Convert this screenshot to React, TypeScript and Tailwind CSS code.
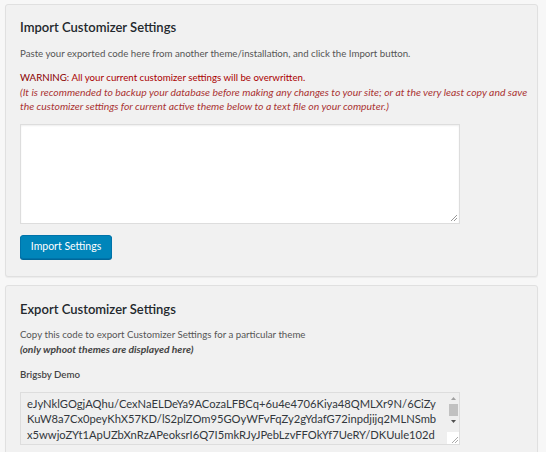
import React from "react";

const exportLines = [
  "eJyNklGOgjAQhu/CexNaELDeYa9ACozaLFBCq+6u4e4706Kiya48QMLXr9N/6CiZy",
  "KuW8a7Cx0peyKhX57KD/lS2plZOm95GOyWFvFqZy2gYdafG72inpdjijq2MLNSmb",
  "x5wwjoZYt1ApUZbXnRzAPeoksrI6Q7I5mkRJyJPebLzvFFOkYf7UeRY/DKUule102d",
];

const Card = ({ children, top }: { children: React.ReactNode; top: string }) => (
  <section
    className={`rounded-[3px] border border-[#e0e0e0] bg-[#f1f1f1] px-[14px] pb-[17px] shadow-[0_1px_1px_rgba(0,0,0,0.05)] ${top}`}
  >
    {children}
  </section>
);

const App = () => {
  return (
    <div className="min-h-screen bg-[#f7f7f7] pl-[5px] pr-[8px] pt-[4px] font-['Lato',sans-serif] text-[#555]">
      <Card top="pt-[12px]">
        <h2 className="text-[13px] font-semibold leading-[20px] text-[#23282d]">
          Import Customizer Settings
        </h2>
        <p className="mt-[9px] text-[9.7px] leading-[14px]">
          Paste your exported code here from another theme/installation, and click the Import button.
        </p>
        <div className="mt-[10px] w-[512px] text-[9.7px] leading-[14.5px] text-[#a00]">
          <p>
            <span className="text-[#8b0000]">WARNING</span>: All your current customizer settings will be overwritten.
          </p>
          <p className="text-[10.4px] italic text-[#a33]">
            (It is recommended to backup your database before making any changes to your site; or at the very least copy and save the customizer settings for current active theme below to a text file on your computer.)
          </p>
        </div>
        <div className="relative mt-[10px] h-[100px] w-[440px] border border-[#ddd] bg-white shadow-[inset_0_1px_2px_rgba(0,0,0,0.07)]">
          <svg className="absolute right-[1px] bottom-[1px]" width="9" height="9" viewBox="0 0 9 9">
            <path d="M8 2 L2 8 M8 5 L5 8" stroke="#999" strokeWidth="1" />
          </svg>
        </div>
        <button className="mt-[11px] h-[24px] w-[92px] rounded-[3px] border border-[#0073aa] bg-[#0085ba] text-[10.5px] text-white shadow-[0_1px_0_#006799]">
          Import Settings
        </button>
      </Card>

      <div className="mt-[8px]">
        <Card top="pt-[13px]">
          <h2 className="text-[13px] font-semibold leading-[20px] text-[#23282d]">
            Export Customizer Settings
          </h2>
          <p className="mt-[8px] text-[9.7px] leading-[15px]">
            Copy this code to export Customizer Settings for a particular theme
          </p>
          <p className="text-[10.3px] font-bold italic leading-[15px] text-[#444]">
            (only wphoot themes are displayed here)
          </p>
          <p className="mt-[10px] text-[9.7px] font-semibold leading-[15px] text-[#444]">
            Brigsby Demo
          </p>
          <div className="relative mt-[10px] flex h-[53px] w-[440px] border border-[#ddd] bg-[#efefef]">
            <div className="flex-1 overflow-hidden pl-[6px] pt-[3px] text-[11.2px] leading-[15.5px] text-[#32373c]">
              {exportLines.map((line) => (
                <div key={line} className="whitespace-pre">
                  {line}
                </div>
              ))}
            </div>
            <div className="flex w-[12px] flex-col items-center pt-[3px]">
              <svg width="7" height="5" viewBox="0 0 7 5">
                <path d="M3.5 1 L6 4 H1 Z" fill="#a0a0a0" />
              </svg>
              <div className="mt-[3px] h-[12px] w-[9px] bg-[#c1c1c1]" />
              <svg className="mt-[3px]" width="7" height="5" viewBox="0 0 7 5">
                <path d="M1 1 H6 L3.5 4 Z" fill="#505050" />
              </svg>
              <div className="mt-auto h-[12px] w-[12px] bg-white">
                <svg width="12" height="12" viewBox="0 0 12 12">
                  <path d="M11 5 L5 11 M11 8 L8 11" stroke="#aaa" strokeWidth="1" />
                </svg>
              </div>
            </div>
          </div>
        </Card>
      </div>
    </div>
  );
};

export default App;
